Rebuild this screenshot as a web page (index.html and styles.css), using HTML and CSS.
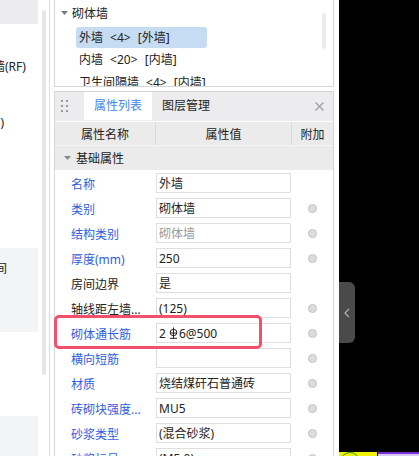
FILE: index.html
```html
<!DOCTYPE html>
<html lang="zh">
<head>
<meta charset="utf-8">
<title>属性列表</title>
<link rel="stylesheet" href="styles.css">
</head>
<body>
<div class="app">
  <aside class="side">
    <div class="left">
      <div class="left-col">
        <div class="lblock top"></div>
        <div class="litem l1"><span>墙(RF)</span></div>
        <div class="litem l2"><span>F)</span></div>
        <div class="lblock mid"><div class="litem l3"><span>间</span></div></div>
        <div class="lblock bot"></div>
      </div>
      <div class="lscroll"></div>
    </div>

    <div class="panels">
      <div class="tree">
        <div class="tree-head">
          <svg class="caret" width="7" height="4" viewBox="0 0 7 4"><path d="M0 0h7L3.5 4z" fill="#7a7a7a"/></svg>
          <span>砌体墙</span>
        </div>
        <div class="tree-item selected">外墙 &lt;4&gt; [外墙]</div>
        <div class="tree-item">内墙 &lt;20&gt; [内墙]</div>
        <div class="tree-item">卫生间隔墙 &lt;4&gt; [内墙]</div>
        <div class="tree-scroll"></div>
      </div>

      <div class="props">
        <div class="props-head">
          <div class="handle">
            <i></i><i></i><i></i><i></i><i></i><i></i>
          </div>
          <div class="tab active">属性列表</div>
          <div class="tab">图层管理</div>
          <div class="close">
            <svg width="9" height="9" viewBox="0 0 9 9"><path d="M0.5 0.5l8 8M8.5 0.5l-8 8" stroke="#9a9a9a" stroke-width="1.1"/></svg>
          </div>
        </div>
        <div class="cols">
          <div class="col c1">属性名称</div>
          <div class="col c2">属性值</div>
          <div class="col c3">附加</div>
        </div>
        <div class="group">
          <svg class="caret" width="7" height="4" viewBox="0 0 7 4"><path d="M0 0h7L3.5 4z" fill="#8a8a8a"/></svg>
          <span>基础属性</span>
        </div>

        <div class="rows">
          <div class="row"><div class="lab blue">名称</div><div class="val"><div class="box">外墙</div></div><div class="ext"></div></div>
          <div class="row"><div class="lab blue">类别</div><div class="val"><div class="box">砌体墙</div></div><div class="ext"><span class="dot"></span></div></div>
          <div class="row"><div class="lab blue">结构类别</div><div class="val"><div class="box dis">砌体墙</div></div><div class="ext"><span class="dot"></span></div></div>
          <div class="row"><div class="lab blue">厚度(mm)</div><div class="val"><div class="box">250</div></div><div class="ext"><span class="dot"></span></div></div>
          <div class="row"><div class="lab">房间边界</div><div class="val"><div class="box">是</div></div><div class="ext"></div></div>
          <div class="row"><div class="lab">轴线距左墙...</div><div class="val"><div class="box">(125)</div></div><div class="ext"><span class="dot"></span></div></div>
          <div class="row"><div class="lab blue">砌体通长筋</div><div class="val"><div class="box">2<svg class="rebar" width="9" height="12" viewBox="0 0 9 12"><path d="M4.5 0.5v11M1 11.3h7M1.3 6h6.4" stroke="#222" stroke-width="1" fill="none"/><rect x="1.3" y="2.5" width="6.4" height="6" rx="2.6" stroke="#222" stroke-width="1" fill="none"/></svg>6@500</div></div><div class="ext"><span class="dot"></span></div></div>
          <div class="row"><div class="lab blue">横向短筋</div><div class="val"><div class="box"></div></div><div class="ext"><span class="dot"></span></div></div>
          <div class="row"><div class="lab blue">材质</div><div class="val"><div class="box">烧结煤矸石普通砖</div></div><div class="ext"><span class="dot"></span></div></div>
          <div class="row"><div class="lab blue">砖砌块强度...</div><div class="val"><div class="box">MU5</div></div><div class="ext"><span class="dot"></span></div></div>
          <div class="row"><div class="lab blue">砂浆类型</div><div class="val"><div class="box">(混合砂浆)</div></div><div class="ext"><span class="dot"></span></div></div>
          <div class="row"><div class="lab blue">砂浆标号</div><div class="val"><div class="box">(M5.0)</div></div><div class="ext"><span class="dot"></span></div></div>
        </div>

        <div class="highlight"></div>
      </div>
    </div>
  </aside>

  <main class="canvas">
    <div class="collapse">
      <svg width="6" height="10" viewBox="0 0 6 10"><path d="M5 0.8L1 5l4 4.2" stroke="#b4b4b4" stroke-width="1.2" fill="none"/></svg>
    </div>
    <div class="strip">
      <div class="yellow"><span class="ring"></span></div>
      <div class="purple"></div>
    </div>
  </main>
</div>
</body>
</html>
```

FILE: styles.css
```css
* { box-sizing: border-box; }

html, body {
  margin: 0;
  padding: 0;
}

body {
  width: 419px;
  height: 456px;
  overflow: hidden;
  font-family: "Noto Sans", "Noto Sans CJK SC", sans-serif;
  font-size: 12px;
  color: #222;
  background: #fff;
}

.app {
  display: flex;
  width: 419px;
  height: 456px;
}

.side {
  width: 339px;
  height: 456px;
  display: flex;
  background: #fff;
  overflow: hidden;
  flex-shrink: 0;
}

/* left clipped panel */
.left {
  width: 50px;
  height: 456px;
  display: flex;
  border-right: 1px solid #dcdcdc;
  flex-shrink: 0;
}

.left-col {
  width: 38px;
  overflow: hidden;
  display: flex;
  flex-direction: column;
}

.lblock { background: #f3f4f6; flex-shrink: 0; }
.lblock.top { height: 24px; background: #ececef; }
.lblock.mid { height: 84px; margin-top: 116px; padding-top: 12px; }
.lblock.bot { height: 60px; margin-top: 84px; }

.litem {
  height: 18px;
  line-height: 18px;
  white-space: nowrap;
  color: #222;
  flex-shrink: 0;
}
.litem span { display: inline-block; }
.l1 { margin-top: 34px; }
.l1 span { margin-left: -7px; }
.l2 { margin-top: 38px; }
.l2 span { margin-left: -6px; }
.l3 span { margin-left: -5px; }

.lscroll {
  width: 4px;
  height: 365px;
  margin-left: 4px;
  margin-top: 10px;
  background: #e6e6e6;
  border-radius: 2px;
}

/* right panels */
.panels {
  width: 280px;
  margin-left: 4px;
  display: flex;
  flex-direction: column;
  flex-shrink: 0;
}

.tree {
  position: relative;
  height: 87px;
  flex-shrink: 0;
  border: 1px solid #d6d6d6;
  border-top: none;
  overflow: hidden;
}

.tree-head {
  height: 26px;
  display: flex;
  align-items: center;
  padding-left: 6px;
  gap: 4px;
}

.tree-item {
  height: 23px;
  line-height: 23px;
  padding-left: 24px;
  white-space: nowrap;
  word-spacing: 4px;
}

.tree-item.selected {
  margin: 1px 0 0 21px;
  width: 131px;
  height: 21px;
  line-height: 21px;
  padding-left: 3px;
  background: #c6dcf2;
  border-radius: 3px;
}

.tree-scroll {
  position: absolute;
  left: 267px;
  top: 13px;
  width: 4px;
  height: 36px;
  background: #ececec;
  border-radius: 2px;
}

.props {
  position: relative;
  flex: 1;
  margin-top: 4px;
  border: 1px solid #d6d6d6;
  border-bottom: none;
}

.props-head {
  height: 30px;
  display: flex;
  align-items: flex-start;
  background: #ececee;
  border-bottom: 1px solid #fff;
}

.handle {
  display: grid;
  grid-template-columns: 2px 2px;
  column-gap: 3px;
  row-gap: 3px;
  margin: 8px 0 0 6px;
}
.handle i {
  display: block;
  width: 2px;
  height: 2px;
  background: #9a9a9a;
}

.tab {
  height: 28px;
  line-height: 28px;
  padding: 0 10px;
  color: #222;
}
.tab.active {
  margin-left: 16px;
  width: 68px;
  text-align: center;
  padding: 0;
  background: #fff;
  color: #3d86f0;
}

.close {
  margin-left: auto;
  margin-right: 9px;
  margin-top: 10px;
  height: 9px;
  display: flex;
}

.cols {
  display: grid;
  grid-template-columns: 101px 136px 41px;
  height: 24px;
  background: #ebebeb;
  border-bottom: 1px solid #f6f6f6;
}
.col {
  display: flex;
  align-items: center;
  justify-content: center;
}
.c1, .c2 { border-right: 1px solid #d9d9d9; }

.group {
  height: 24px;
  background: #ebebeb;
  display: flex;
  align-items: center;
  padding-left: 9px;
  gap: 5px;
}

.rows { padding-top: 1px; }

.row {
  display: grid;
  grid-template-columns: 101px 136px 41px;
  height: 25px;
}

.lab {
  display: flex;
  align-items: center;
  padding-left: 16px;
  white-space: nowrap;
  color: #222;
}
.lab.blue { color: #2d5de3; }

.val { padding-top: 2px; }
.box {
  width: 135px;
  height: 20px;
  border: 1px solid #dedede;
  padding-left: 2px;
  display: flex;
  align-items: center;
  white-space: nowrap;
  color: #222;
}
.box.dis { color: #9a9a9a; }

.rebar { margin: 0 1px 0 3px; }

.ext {
  display: flex;
  align-items: center;
  justify-content: center;
}
.dot {
  width: 9px;
  height: 9px;
  border-radius: 50%;
  background: #dcdcdc;
  border: 1px solid #c4c4c4;
}

.highlight {
  position: absolute;
  left: -1px;
  top: 223px;
  width: 208px;
  height: 34px;
  border: 3px solid #f4506b;
  border-radius: 5px;
  pointer-events: none;
}

/* canvas */
.canvas {
  position: relative;
  flex: 1;
  background: #000;
}

.collapse {
  position: absolute;
  left: 0;
  top: 282px;
  width: 16px;
  height: 61px;
  background: #4a4a4a;
  border-radius: 0 6px 6px 0;
  display: flex;
  align-items: center;
  justify-content: center;
}

.strip {
  position: absolute;
  left: 0;
  right: 0;
  bottom: 0;
  height: 4px;
  display: flex;
}
.yellow {
  position: relative;
  width: 38px;
  background: #f2f200;
  overflow: hidden;
}
.ring {
  position: absolute;
  left: 1px;
  top: 0;
  width: 20px;
  height: 20px;
  border: 1px solid #1a9a1a;
  border-radius: 50%;
}
.purple {
  flex: 1;
  margin-left: 1px;
  border-top: 2px solid #7b2fd8;
  background: #d8c8f4;
}
```
